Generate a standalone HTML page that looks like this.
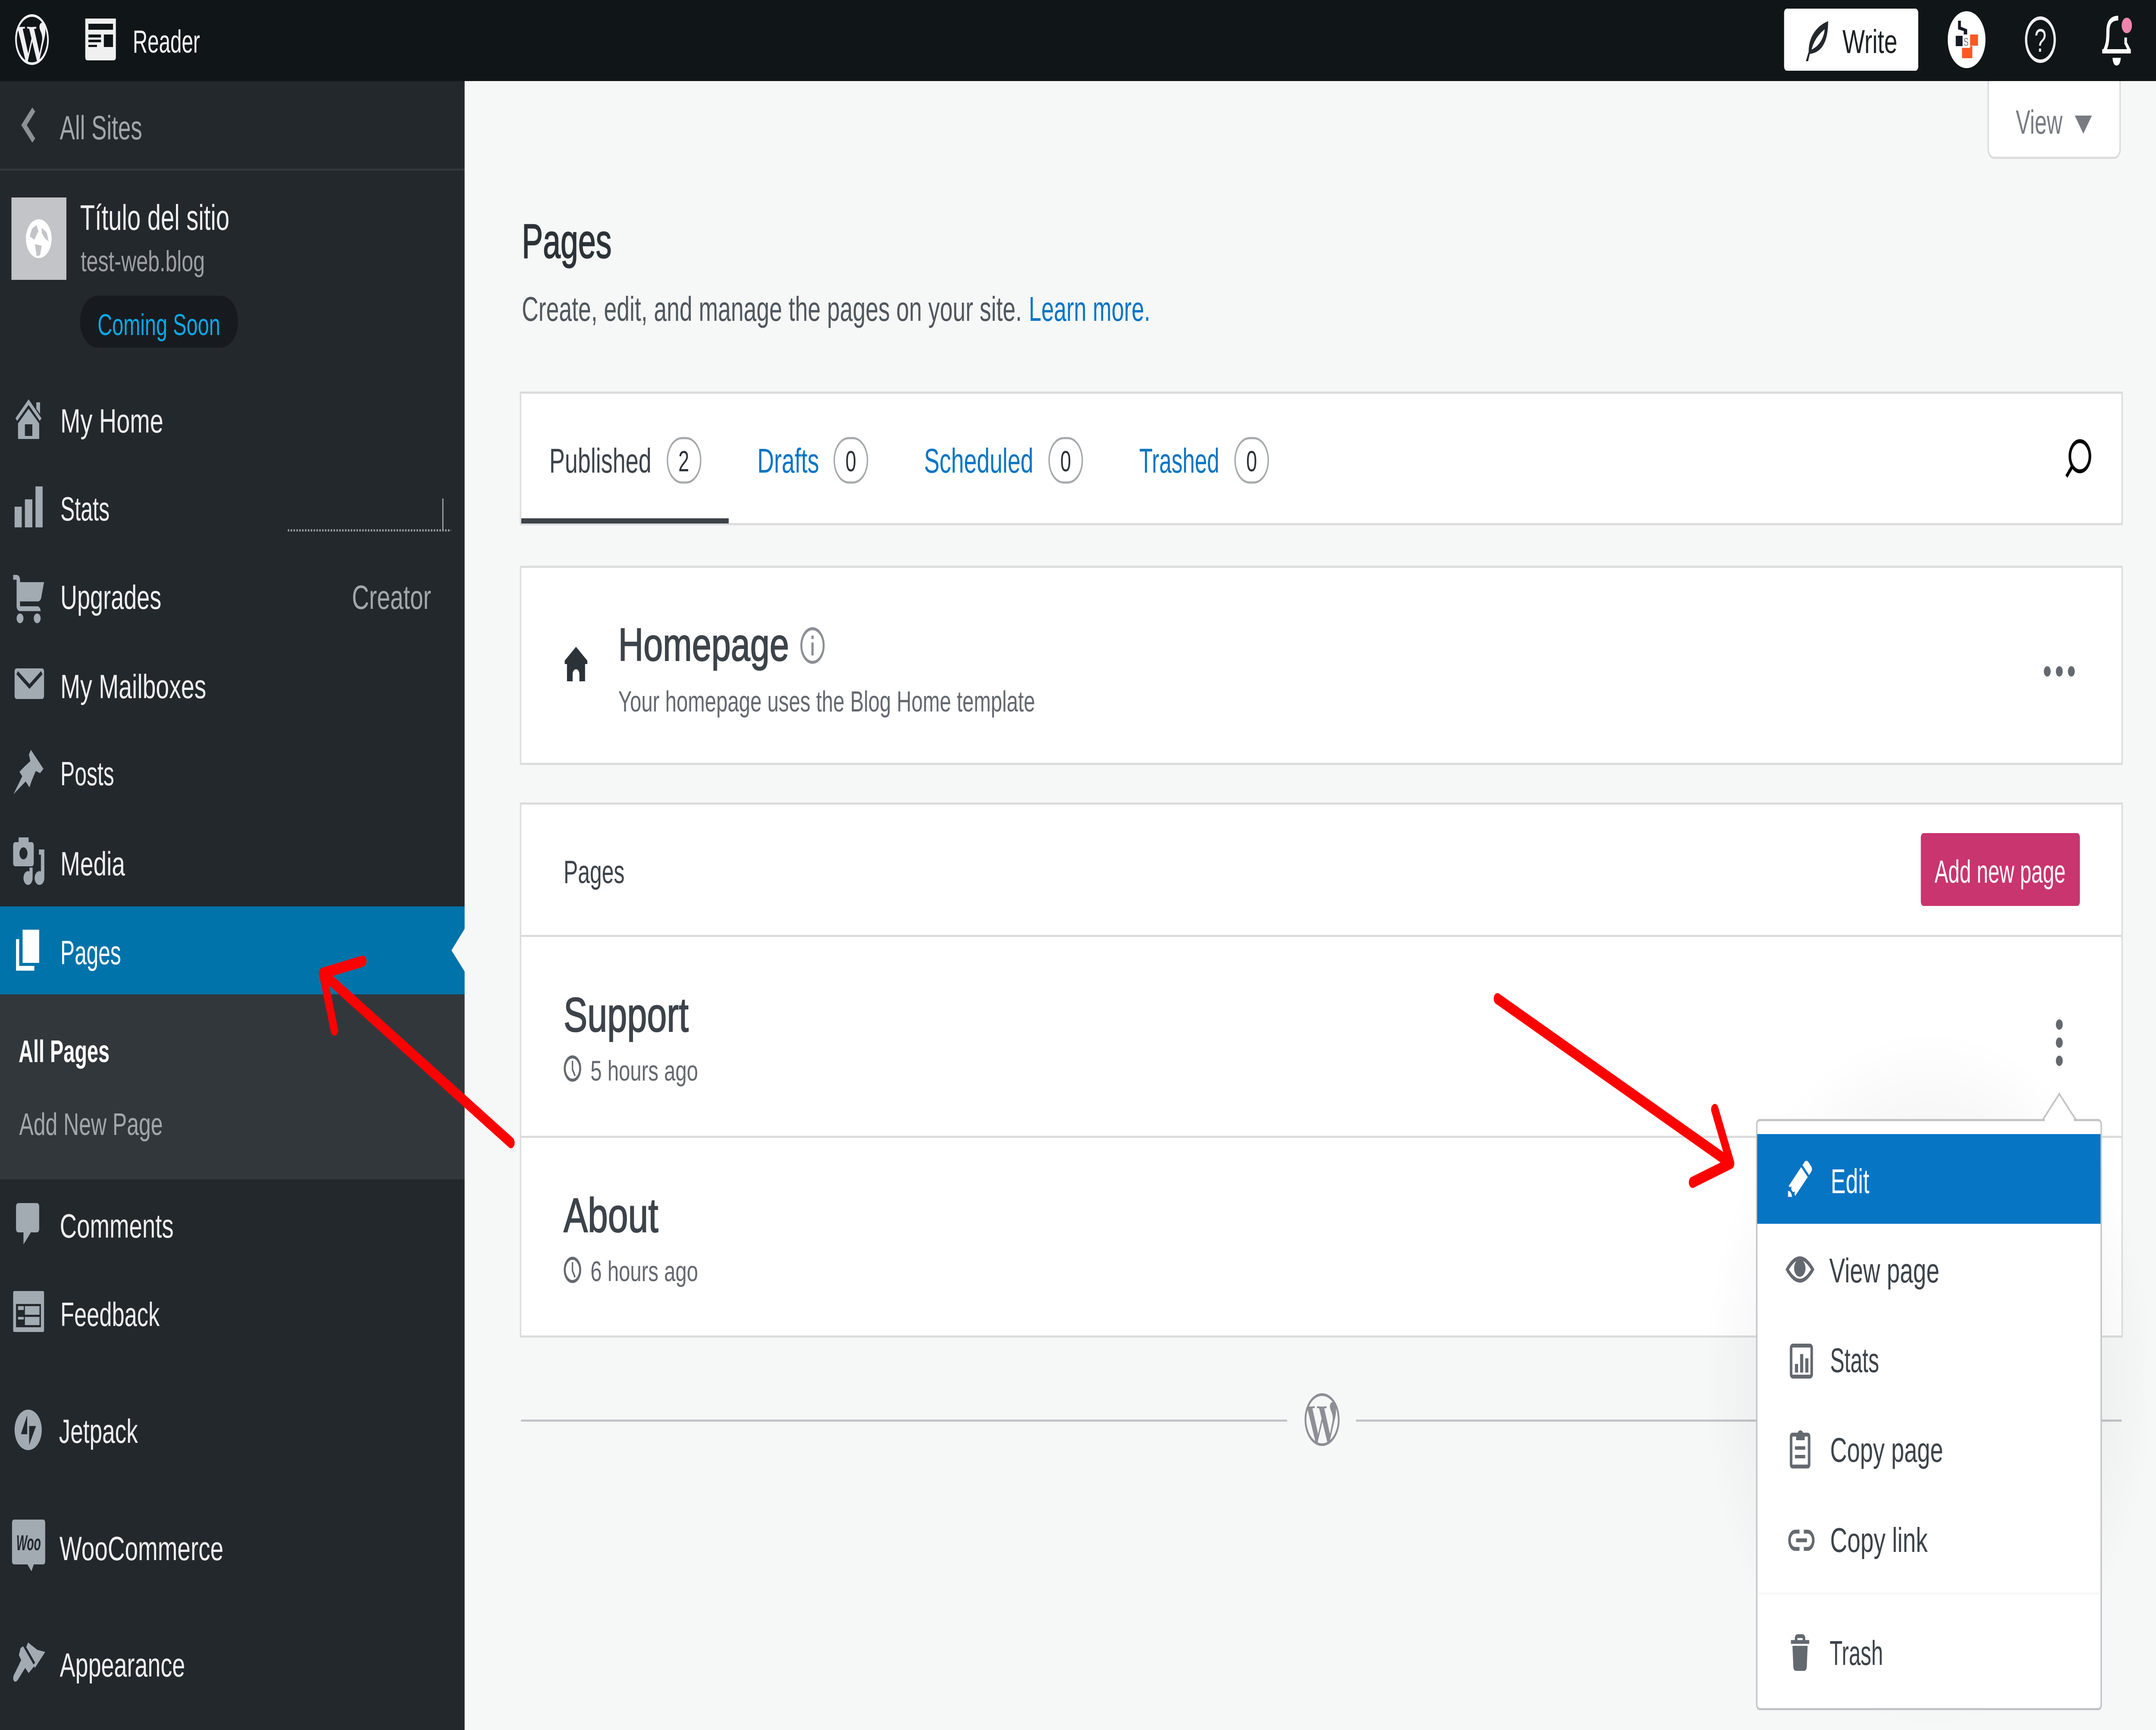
<!DOCTYPE html>
<html lang="en">
<head>
<meta charset="utf-8">
<title>Pages</title>
<style>
html,body{margin:0;padding:0;width:100%;height:100%;overflow:hidden;background:#f6f7f7}
svg{display:block;position:fixed;left:0;top:0;width:100vw;height:100vh;overflow:hidden;font-family:"Liberation Sans",sans-serif}
.n{font-size:78px;fill:#f0f0f1}
.mut{fill:#a2a7ab}
.sub{font-size:80px;fill:#50575e}
.lnk{fill:#0675c4}
.tab{font-size:80px}
.dig{font-size:68px;fill:#2c3338;text-anchor:middle}
.pill{fill:#fff;stroke:#a7aaad;stroke-width:5}
.h{font-size:112px;fill:#3c434a;stroke:#3c434a;stroke-width:2}
.t{font-size:66px;fill:#646970}
.m{font-size:80px;fill:#3c434a}
.ic{fill:#a2aab2}
.mi{fill:none;stroke:#646970;stroke-width:9}
.card{fill:#fff;stroke:#dcdcde;stroke-width:5}
</style>
</head>
<body>
<svg xmlns="http://www.w3.org/2000/svg" viewBox="0 0 7536 4012" preserveAspectRatio="none">
<defs>
<radialGradient id="sh" cx="50%" cy="50%" r="50%">
<stop offset="0.6" stop-color="#000" stop-opacity=".05"/>
<stop offset="1" stop-color="#000" stop-opacity="0"/>
</radialGradient>
</defs>
<!-- page -->
<rect width="7536" height="4012" fill="#f6f7f7"/>

<!-- View button -->
<rect x="6949.5" y="150" width="461" height="216" rx="20" fill="#fff" stroke="#dcdcde" stroke-width="5"/>
<text x="7046" y="310" textLength="163" lengthAdjust="spacingAndGlyphs" font-size="78" fill="#787c82">View</text>
<path d="M7252 268H7312L7282 310Z" fill="#787c82"/>

<!-- Heading -->
<text x="1824" y="598" textLength="314" lengthAdjust="spacingAndGlyphs" font-size="112" fill="#2c3338" stroke="#2c3338" stroke-width="2">Pages</text>
<text x="1824" y="744" textLength="1748" lengthAdjust="spacingAndGlyphs" class="sub">Create, edit, and manage the pages on your site.</text>
<text x="3596" y="744" textLength="425" lengthAdjust="spacingAndGlyphs" class="sub lnk" style="fill:#0675c4">Learn more.</text>

<!-- Tabs -->
<rect class="card" x="1819.5" y="910.5" width="5598" height="305"/>
<rect x="1822" y="1202" width="725" height="12" fill="#3c434a"/>
<text x="1920" y="1096" textLength="357" lengthAdjust="spacingAndGlyphs" class="tab" fill="#3c434a">Published</text>
<rect class="pill" x="2333" y="1016" width="116" height="103" rx="51"/>
<text x="2390" y="1093" class="dig">2</text>
<text x="2647" y="1096" textLength="216" lengthAdjust="spacingAndGlyphs" class="tab lnk">Drafts</text>
<rect class="pill" x="2916" y="1016" width="116" height="103" rx="51"/>
<text x="2974" y="1093" class="dig">0</text>
<text x="3230" y="1096" textLength="382" lengthAdjust="spacingAndGlyphs" class="tab lnk">Scheduled</text>
<rect class="pill" x="3667" y="1016" width="116" height="103" rx="51"/>
<text x="3725" y="1093" class="dig">0</text>
<text x="3982" y="1096" textLength="280" lengthAdjust="spacingAndGlyphs" class="tab lnk">Trashed</text>
<rect class="pill" x="4317" y="1016" width="116" height="103" rx="51"/>
<text x="4375" y="1093" class="dig">0</text>
<circle cx="7270" cy="1058" r="35" fill="none" stroke="#000" stroke-width="9"/>
<path d="M7243 1082L7223 1105" stroke="#000" stroke-width="9" fill="none"/>

<!-- Homepage card -->
<rect class="card" x="1819.5" y="1314.5" width="5598" height="457"/>
<path transform="translate(1966,1496) scale(3.95,4)" fill="#2c3338" d="M22 9L12 1 2 9v2h2v10h5v-4c0-1.657 1.343-3 3-3s3 1.343 3 3v4h5V11h2V9z"/>
<text x="2161" y="1532" textLength="597" lengthAdjust="spacingAndGlyphs" class="h" style="font-size:108px">Homepage</text>
<circle cx="2840" cy="1497" r="39" fill="none" stroke="#8c8f94" stroke-width="7"/>
<rect x="2836" y="1490" width="8" height="30" fill="#8c8f94"/>
<rect x="2836" y="1474" width="8" height="8" fill="#8c8f94"/>
<text x="2161" y="1650" textLength="1457" lengthAdjust="spacingAndGlyphs" font-size="68" fill="#646970">Your homepage uses the Blog Home template</text>
<circle cx="7156" cy="1557" r="12" fill="#646970"/>
<circle cx="7198" cy="1557" r="12" fill="#646970"/>
<circle cx="7240" cy="1557" r="12" fill="#646970"/>

<!-- Pages card -->
<rect class="card" x="1819.5" y="1863.5" width="5598" height="1236"/>
<rect x="1819" y="2168" width="5599" height="5" fill="#dcdcde"/>
<rect x="1819" y="2634" width="5599" height="5" fill="#dcdcde"/>
<text x="1970" y="2048" textLength="213" lengthAdjust="spacingAndGlyphs" font-size="75" fill="#3c434a">Pages</text>
<rect x="6714" y="1932" width="556" height="169" rx="10" fill="#c9356e"/>
<text x="6762" y="2047" textLength="458" lengthAdjust="spacingAndGlyphs" font-size="74" fill="#fff">Add new page</text>

<text x="1970" y="2392" textLength="437" lengthAdjust="spacingAndGlyphs" class="h">Support</text>
<circle cx="2001" cy="2478" r="27" fill="none" stroke="#646970" stroke-width="7"/>
<path d="M2001 2460V2480L2010 2495" fill="none" stroke="#646970" stroke-width="5"/>
<text x="2064" y="2506" textLength="376" lengthAdjust="spacingAndGlyphs" class="t">5 hours ago</text>

<text x="1970" y="2857" textLength="331" lengthAdjust="spacingAndGlyphs" class="h">About</text>
<circle cx="2001" cy="2945" r="27" fill="none" stroke="#646970" stroke-width="7"/>
<path d="M2001 2927V2947L2010 2962" fill="none" stroke="#646970" stroke-width="5"/>
<text x="2064" y="2971" textLength="376" lengthAdjust="spacingAndGlyphs" class="t">6 hours ago</text>

<circle cx="7198" cy="2376" r="12" fill="#646970"/>
<circle cx="7198" cy="2418" r="12" fill="#646970"/>
<circle cx="7198" cy="2460" r="12" fill="#646970"/>

<!-- Footer -->
<rect x="1821" y="3292" width="2678" height="5" fill="#c3c4c7"/>
<rect x="4740" y="3292" width="2676" height="5" fill="#c3c4c7"/>
<path transform="translate(4560,3231) scale(5.1)" fill="#8c8f94" d="M21.469 6.825c.84 1.537 1.318 3.3 1.318 5.175 0 3.979-2.156 7.456-5.363 9.325l3.295-9.527c.615-1.54.82-2.771.82-3.864 0-.405-.026-.78-.07-1.11m-7.981.105c.647-.03 1.232-.105 1.232-.105.582-.075.514-.93-.067-.899 0 0-1.755.135-2.88.135-1.064 0-2.85-.15-2.85-.15-.585-.03-.661.855-.075.885 0 0 .54.061 1.125.09l1.68 4.605-2.37 7.08L5.354 6.9c.649-.03 1.234-.1 1.234-.1.585-.075.516-.93-.065-.896 0 0-1.746.138-2.874.138-.2 0-.438-.008-.69-.015C4.911 3.15 8.235 1.215 12 1.215c2.809 0 5.365 1.072 7.286 2.833-.046-.003-.091-.009-.141-.009-1.06 0-1.812.923-1.812 1.914 0 .89.513 1.643 1.06 2.531.411.72.89 1.643.89 2.977 0 .915-.354 1.994-.821 3.479l-1.075 3.585-3.9-11.61.001.014zM12 22.784c-1.059 0-2.081-.153-3.048-.437l3.237-9.406 3.315 9.087c.024.053.05.101.078.149-1.12.393-2.325.609-3.582.609M1.211 12c0-1.564.336-3.05.935-4.39L7.29 21.709C3.694 19.96 1.212 16.271 1.211 12M12 0C5.385 0 0 5.385 0 12s5.385 12 12 12 12-5.385 12-12S18.615 0 12 0"/>

<!-- Popover -->
<ellipse cx="6742" cy="3200" rx="790" ry="810" fill="url(#sh)"/>
<path d="M7140 2597L7198 2537L7256 2597Z" fill="#fff" stroke="#c3c4c7" stroke-width="5"/>
<rect x="6140.5" y="2597.5" width="1204" height="1366" rx="10" fill="#fff" stroke="#c3c4c7" stroke-width="5"/>
<rect x="7147" y="2592" width="102" height="10" fill="#fff"/>
<rect x="6142" y="2630" width="1200" height="208" fill="#0675c4"/>
<path transform="translate(6236,2679) scale(4.6)" fill="#fff" d="M13 6l5 5-9.507 9.507c-.686-.686-.69-1.794-.012-2.485l-.002-.003c-.69.676-1.8.673-2.485-.013-.677-.677-.686-1.762-.036-2.455l-.008-.008c-.694.65-1.78.64-2.456-.036L13 6zm7.586-.414l-2.172-2.172c-.78-.78-2.047-.78-2.828 0L14 5l5 5 1.586-1.586c.78-.78.78-2.047 0-2.828zM3 18v3h3c0-1.657-1.343-3-3-3z"/>
<text x="6399" y="2767" textLength="135" lengthAdjust="spacingAndGlyphs" class="m" style="fill:#fff">Edit</text>

<path class="mi" d="M6247 2944Q6291 2892 6336 2944Q6291 2996 6247 2944Z"/>
<circle cx="6291" cy="2941" r="20" fill="#646970"/>
<text x="6394" y="2974" textLength="385" lengthAdjust="spacingAndGlyphs" class="m">View page</text>

<rect class="mi" x="6260.5" y="3120.5" width="72" height="72" rx="6"/>
<rect x="6274" y="3163" width="11" height="20" fill="#646970"/>
<rect x="6292" y="3140" width="11" height="43" fill="#646970"/>
<rect x="6310" y="3150" width="11" height="33" fill="#646970"/>
<text x="6397" y="3182" textLength="171" lengthAdjust="spacingAndGlyphs" class="m">Stats</text>

<rect class="mi" x="6260.5" y="3327" width="63" height="74" rx="5"/>
<path d="M6278 3340V3328H6282A11 11 0 0 1 6304 3328H6308V3340Z" fill="#646970"/>
<path d="M6274 3358H6310M6274 3378H6310" stroke="#646970" stroke-width="8" fill="none"/>
<text x="6397" y="3390" textLength="395" lengthAdjust="spacingAndGlyphs" class="m">Copy page</text>

<path class="mi" d="M6290 3552H6275A20 20 0 0 0 6275 3592H6290M6305 3552H6318A20 20 0 0 1 6318 3592H6305M6278 3572H6316"/>
<text x="6397" y="3599" textLength="341" lengthAdjust="spacingAndGlyphs" class="m">Copy link</text>

<rect x="6143" y="3693" width="1199" height="5" fill="#f6f7f7"/>
<path transform="translate(6237,3781) scale(4.57,4.47)" fill="#646970" d="M6.187 8h11.625l-.695 11.125C17.05 20.18 16.177 21 15.12 21H8.88c-1.057 0-1.93-.82-1.997-1.875L6.187 8zM19 5v2H5V5h3V4c0-1.105.895-2 2-2h4c1.105 0 2 .895 2 2v1h3zm-9 0h4V4h-4v1z"/>
<text x="6395" y="3861" textLength="187" lengthAdjust="spacingAndGlyphs" class="m">Trash</text>

<!-- Sidebar -->
<rect x="0" y="188" width="1624" height="3824" fill="#23282d"/>
<rect x="0" y="391" width="1624" height="5" fill="#32373c"/>
<path d="M118 254L84 290L118 326" fill="none" stroke="#8c9196" stroke-width="14"/>
<text x="209" y="323" textLength="288" lengthAdjust="spacingAndGlyphs" class="n mut">All Sites</text>

<rect x="40" y="458" width="192" height="191" fill="#c3c4c7"/>
<circle cx="135.500" cy="553.500" r="45" fill="#fff"/>
<path d="M112 530L128 522L134 536L120 556L104 548ZM146 528L164 540L170 560L156 552L146 540ZM122 566L146 570L140 592L128 594Z" fill="#c3c4c7"/>
<text x="280" y="533" textLength="522" lengthAdjust="spacingAndGlyphs" font-size="83" fill="#f0f0f1">Título del sitio</text>
<text x="282" y="629" textLength="434" lengthAdjust="spacingAndGlyphs" font-size="68" fill="#9ca0a4">test-web.blog</text>
<rect x="280" y="686" width="552" height="120" rx="60" fill="#171b1f"/>
<text x="341" y="777" textLength="429" lengthAdjust="spacingAndGlyphs" font-size="70" fill="#0ca8e6">Coming Soon</text>

<!-- My Home -->
<path class="ic" d="M127 933H140V960L127 948ZM100 926L145 970L139 976L100 939L60 976L54 970Z"/>
<path class="ic" fill-rule="evenodd" d="M100 948L137 982V1018H63V982ZM87 984V1011H113V984Z"/>
<text x="211" y="1003" textLength="360" lengthAdjust="spacingAndGlyphs" class="n">My Home</text>

<!-- Stats -->
<rect class="ic" x="51" y="1175" width="25" height="48"/>
<rect class="ic" x="87" y="1158" width="26" height="65"/>
<rect class="ic" x="124" y="1128" width="25" height="95"/>
<text x="211" y="1207" textLength="172" lengthAdjust="spacingAndGlyphs" class="n">Stats</text>
<path d="M1006 1230H1577" stroke="#a2a7ab" stroke-width="5" stroke-dasharray="5 5" fill="none"/>
<rect x="1546" y="1156" width="4" height="74" fill="#a2a7ab"/>

<!-- Upgrades -->
<path class="ic" transform="translate(28,1322) scale(6,5.6)" d="M9 20c0-1.1-.9-2-2-2s-1.99.9-1.99 2S5.9 22 7 22s2-.9 2-2zm8-2c-1.1 0-1.99.9-1.99 2s.89 2 1.99 2 2-.9 2-2-.9-2-2-2zm.396-5c.937 0 1.75-.65 1.952-1.566L21 5H7V4c0-1.105-.895-2-2-2H3v2h2v11c0 1.105.895 2 2 2h12c0-1.105-.895-2-2-2H7v-2h10.396z"/>
<text x="211" y="1412" textLength="353" lengthAdjust="spacingAndGlyphs" class="n">Upgrades</text>
<text x="1230" y="1412" textLength="277" lengthAdjust="spacingAndGlyphs" class="n mut">Creator</text>

<!-- Mail -->
<rect class="ic" x="51" y="1550" width="103" height="71" rx="7"/>
<path d="M60 1560L103 1592L146 1560" fill="none" stroke="#23282d" stroke-width="9"/>
<text x="211" y="1619" textLength="510" lengthAdjust="spacingAndGlyphs" class="n">My Mailboxes</text>

<!-- Posts -->
<path class="ic" d="M108 1739L152 1783L140 1793L125 1788L110 1812L103 1826L68 1790L82 1780L106 1765L101 1750ZM47 1842L78 1800L90 1812Z"/>
<text x="211" y="1821" textLength="188" lengthAdjust="spacingAndGlyphs" class="n">Posts</text>

<!-- Media -->
<path class="ic" fill-rule="evenodd" d="M65 1953V1942H100V1953H110Q118 1953 118 1961V2001Q118 2009 110 2009H54Q46 2009 46 2001V1961Q46 1953 54 1953ZM82 1965A14 14 0 1 0 82 1993A14 14 0 1 0 82 1965Z"/>
<path class="ic" d="M136 1970H155V2036A17 16 0 1 1 143 2021V1982H136ZM103 2012H114V2036A16 16 0 1 1 103 2021Z"/>
<text x="211" y="2030" textLength="226" lengthAdjust="spacingAndGlyphs" class="n">Media</text>

<!-- Pages (selected) -->
<rect x="0" y="2102" width="1624" height="204" fill="#0073aa"/>
<path d="M1624 2154L1578 2204L1624 2253Z" fill="#f6f7f7"/>
<rect x="79" y="2156" width="58" height="77" fill="#fff"/>
<path d="M56 2178H67V2240H120V2251H56Z" fill="#fff"/>
<text x="211" y="2236" textLength="212" lengthAdjust="spacingAndGlyphs" class="n" style="fill:#fff">Pages</text>

<!-- Submenu -->
<rect x="0" y="2306" width="1624" height="429" fill="#32373c"/>
<text x="65" y="2463" textLength="318" lengthAdjust="spacingAndGlyphs" font-size="72" font-weight="700" fill="#fff">All Pages</text>
<text x="67" y="2632" textLength="502" lengthAdjust="spacingAndGlyphs" font-size="72" class="mut">Add New Page</text>

<!-- Comments -->
<path class="ic" d="M65 2790H128Q137 2790 137 2799V2849Q137 2858 128 2858H108L82 2886V2858H65Q56 2858 56 2849V2799Q56 2790 65 2790Z"/>
<text x="209" y="2870" textLength="398" lengthAdjust="spacingAndGlyphs" class="n">Comments</text>

<!-- Feedback -->
<rect class="ic" x="46" y="2994" width="108" height="95" rx="4"/>
<rect x="56" y="3024" width="87" height="54" fill="#23282d"/>
<rect class="ic" x="63" y="3029" width="20" height="9"/>
<rect class="ic" x="87" y="3029" width="51" height="20"/>
<rect class="ic" x="63" y="3054" width="20" height="6"/>
<rect class="ic" x="87" y="3054" width="51" height="19"/>
<text x="211" y="3075" textLength="347" lengthAdjust="spacingAndGlyphs" class="n">Feedback</text>

<!-- Jetpack -->
<ellipse class="ic" cx="98.500" cy="3316" rx="47.500" ry="47"/>
<path d="M95 3282V3326H73ZM102 3351V3307H126Z" fill="#23282d"/>
<text x="206" y="3346" textLength="276" lengthAdjust="spacingAndGlyphs" class="n">Jetpack</text>

<!-- WooCommerce -->
<path class="ic" d="M50 3524H150Q158 3524 158 3532V3620Q158 3628 150 3628H118L110 3644L96 3628H50Q42 3628 42 3620V3532Q42 3524 50 3524Z"/>
<text x="57" y="3595" textLength="86" lengthAdjust="spacingAndGlyphs" font-size="50" font-weight="700" font-style="italic" fill="#23282d">Woo</text>
<text x="208" y="3618" textLength="573" lengthAdjust="spacingAndGlyphs" class="n">WooCommerce</text>

<!-- Appearance -->
<path class="ic" d="M98 3809L130 3826L158 3831L122 3868L108 3850L88 3826ZM72 3822L84 3816L122 3862L110 3872L100 3880L88 3868L62 3896Q52 3904 47 3896Q44 3888 52 3880L74 3850L66 3838Z"/>
<path d="M82 3814L120 3858" stroke="#23282d" stroke-width="7" fill="none"/>
<text x="209" y="3888" textLength="438" lengthAdjust="spacingAndGlyphs" class="n">Appearance</text>

<!-- Top bar -->
<rect x="0" y="0" width="7536" height="188" fill="#101517"/>
<path transform="translate(53,33) scale(4.9)" fill="#f0f0f1" d="M21.469 6.825c.84 1.537 1.318 3.3 1.318 5.175 0 3.979-2.156 7.456-5.363 9.325l3.295-9.527c.615-1.54.82-2.771.82-3.864 0-.405-.026-.78-.07-1.11m-7.981.105c.647-.03 1.232-.105 1.232-.105.582-.075.514-.93-.067-.899 0 0-1.755.135-2.88.135-1.064 0-2.85-.15-2.85-.15-.585-.03-.661.855-.075.885 0 0 .54.061 1.125.09l1.68 4.605-2.37 7.08L5.354 6.9c.649-.03 1.234-.1 1.234-.1.585-.075.516-.93-.065-.896 0 0-1.746.138-2.874.138-.2 0-.438-.008-.69-.015C4.911 3.15 8.235 1.215 12 1.215c2.809 0 5.365 1.072 7.286 2.833-.046-.003-.091-.009-.141-.009-1.06 0-1.812.923-1.812 1.914 0 .89.513 1.643 1.06 2.531.411.72.89 1.643.89 2.977 0 .915-.354 1.994-.821 3.479l-1.075 3.585-3.9-11.61.001.014zM12 22.784c-1.059 0-2.081-.153-3.048-.437l3.237-9.406 3.315 9.087c.024.053.05.101.078.149-1.12.393-2.325.609-3.582.609M1.211 12c0-1.564.336-3.05.935-4.39L7.29 21.709C3.694 19.96 1.212 16.271 1.211 12M12 0C5.385 0 0 5.385 0 12s5.385 12 12 12 12-5.385 12-12S18.615 0 12 0"/>
<path d="M298 43H405V132Q405 140 397 140H306Q298 140 298 132Z" fill="#f0f0f1"/>
<rect x="309" y="55" width="86" height="14" fill="#101517"/>
<rect x="363" y="80" width="32" height="29" fill="#101517"/>
<rect x="309" y="80" width="44" height="7" fill="#101517"/>
<rect x="309" y="92" width="44" height="6" fill="#101517"/>
<rect x="309" y="104" width="30" height="5" fill="#101517"/>
<text x="464" y="122" textLength="235" lengthAdjust="spacingAndGlyphs" font-size="74" fill="#f6f7f7">Reader</text>

<rect x="6236" y="20" width="469" height="144" rx="10" fill="#fff"/>
<path fill="#23282d" fill-rule="evenodd" d="M6390 49C6350 60 6322 85 6322 120L6312 142L6320 142L6326 125C6365 122 6390 100 6390 49ZM6378 68C6355 80 6340 95 6332 115C6355 108 6374 92 6378 68Z"/>
<text x="6440" y="123" textLength="192" lengthAdjust="spacingAndGlyphs" font-size="77" fill="#1d2327">Write</text>

<circle cx="6874" cy="92" r="66" fill="#fff"/>
<path d="M6844 48H6854V62L6876 68V80H6864V72L6844 68Z" fill="#171b26"/>
<rect x="6836" y="83" width="24" height="24" fill="#171b26"/>
<text x="6872" y="106" text-anchor="middle" font-size="26" fill="#777">S</text>
<rect x="6886" y="80" width="28" height="26" fill="#ff5722"/>
<path d="M6858 135V111H6886V107H6894V135Z" fill="#ff5722"/>

<circle cx="7132" cy="92" r="50" fill="none" stroke="#f0f0f1" stroke-width="8"/>
<text x="7132" y="120" text-anchor="middle" font-size="76" fill="#f0f0f1">?</text>

<path d="M7356 118C7366 104 7368 92 7368 72C7368 52 7380 42 7404 42" fill="none" stroke="#fff" stroke-width="11"/>
<path d="M7430 87V100L7444 118" fill="none" stroke="#fff" stroke-width="9"/>
<rect x="7348" y="114" width="100" height="10" fill="#fff"/>
<path d="M7384 134H7413Q7411 152 7398 152Q7386 152 7384 134Z" fill="#fff"/>
<circle cx="7434" cy="59" r="18" fill="#ef84ae"/>

<!-- Annotation arrows -->
<g fill="none" stroke="#ff0000" stroke-width="26" stroke-linecap="round" stroke-linejoin="round">
<path d="M1786 2650L1128 2257"/>
<path d="M1268 2229L1128 2257L1169 2389"/>
<path d="M5234 2316L6049 2698"/>
<path d="M5994 2573L6049 2698L5916 2742"/>
</g>
</svg>
</body>
</html>
